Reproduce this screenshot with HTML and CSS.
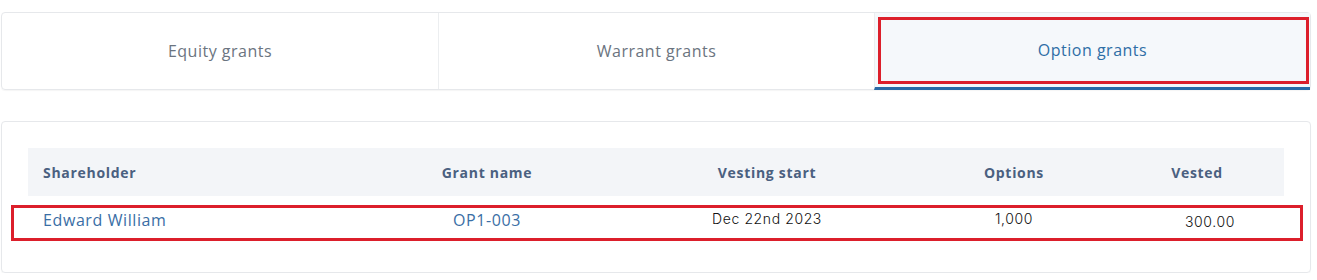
FILE: index.html
```html
<!DOCTYPE html>
<html lang="en">
<head>
    <meta charset="UTF-8">
    <meta name="viewport" content="width=device-width, initial-scale=1.0">
    <title>Grants</title>
    <link rel="stylesheet" href="styles.css">
</head>
<body>

    <div class="tabs">
        <div class="tab">Equity grants</div>
        <div class="tab">Warrant grants</div>
        <div class="tab active">Option grants</div>
    </div>

    <div class="card">
        <div class="grid head">
            <div class="cell first">Shareholder</div>
            <div class="cell">Grant name</div>
            <div class="cell">Vesting start</div>
            <div class="cell">Options</div>
            <div class="cell">Vested</div>
        </div>
        <div class="grid row marked">
            <div class="cell first link">Edward William</div>
            <div class="cell link">OP1-003</div>
            <div class="cell num">Dec 22nd 2023</div>
            <div class="cell num">1,000</div>
            <div class="cell num vested">300.00</div>
        </div>
    </div>

</body>
</html>
```

FILE: styles.css
```css
body {
    margin: 0;
    padding: 12px 6px 0 1px;
    font-family: "Open Sans", "Noto Sans", sans-serif;
    background: #fff;
}
.tabs {
    display: grid;
    grid-template-columns: 1fr 1fr 1fr;
    border: 1px solid #e6e8eb;
    border-radius: 4px;
    box-shadow: 0 1px 1px rgba(0, 0, 0, 0.04);
    height: 76px;
}
.tab {
    display: flex;
    align-items: center;
    justify-content: center;
    font-size: 16px;
    color: #6b7480;
    letter-spacing: 0.5px;
    border-left: 1px solid #eceef0;
}
.tab:first-child {
    border-left: none;
}
.tab.active {
    position: relative;
    color: #2f6ea6;
    background: #f5f8fb;
    border-bottom: 3px solid #2a6aa6;
    margin-bottom: -1px;
}
.tab.active::after {
    content: "";
    position: absolute;
    left: 3px;
    right: 1px;
    top: 4px;
    bottom: 3px;
    border: 3px solid #dc1f2b;
}
.card {
    margin-top: 31px;
    border: 1px solid #e6e8eb;
    border-radius: 4px;
    box-shadow: 0 1px 1px rgba(0, 0, 0, 0.04);
    padding: 26px 26px 28px 26px;
}
.grid {
    display: grid;
    grid-template-columns: 330px 258px 302px 192px 1fr;
    align-items: center;
}
.head {
    background: #f3f5f8;
    height: 48px;
    font-weight: bold;
    font-size: 14px;
    color: #4a6080;
    letter-spacing: 0.7px;
}
.cell {
    text-align: center;
}
.cell.first {
    text-align: left;
    padding-left: 15px;
}
.row {
    height: 48px;
    position: relative;
}
.marked::after {
    content: "";
    position: absolute;
    left: -17px;
    right: -19px;
    top: 9px;
    bottom: 3px;
    border: 3px solid #dc1f2b;
}
.link {
    color: #3a6ea5;
    font-size: 16px;
    letter-spacing: 0.6px;
}
.num {
    font-family: Inter, "Noto Sans", sans-serif;
    font-size: 14px;
    font-weight: 300;
    letter-spacing: 0.6px;
    color: #111;
    margin-top: -3px;
}
.vested {
    padding-left: 26px;
    margin-top: 3px;
}
```
